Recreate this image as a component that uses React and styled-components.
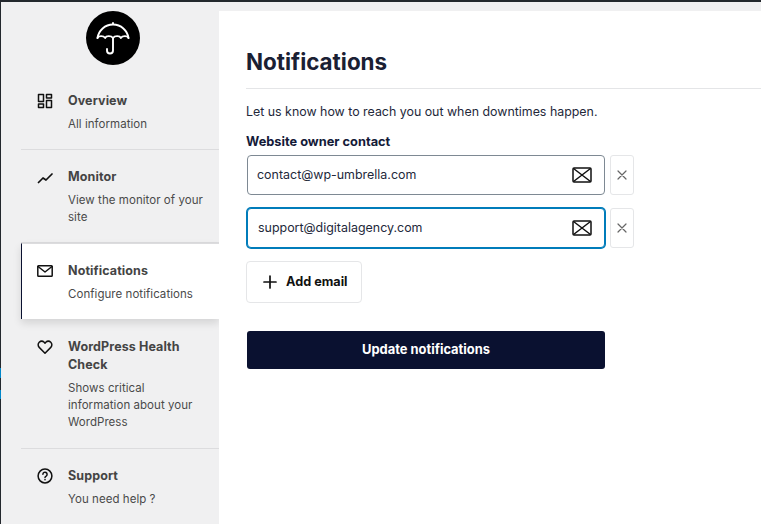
import React from "react";
import styled, { createGlobalStyle } from "styled-components";

const Global = createGlobalStyle`
  html, body { margin: 0; padding: 0; background: #f0f0f1; }
  * { box-sizing: border-box; }
  body { font-family: Inter, "Liberation Sans", sans-serif; -webkit-font-smoothing: antialiased; }
`;

const Page = styled.div`
  width: 761px;
  height: 524px;
  overflow: hidden;
  display: flex;
  flex-direction: column;
  background: #f0f0f1;
`;
const TopBar = styled.div`
  height: 2px;
  flex: none;
  background: #23282d;
`;
const Body = styled.div`
  flex: 1;
  display: flex;
  min-height: 0;
`;
const AdminEdge = styled.div`
  width: 1px;
  flex: none;
  background: linear-gradient(
    to bottom,
    #23282d 0 366px,
    #0086c9 366px 376px,
    #23282d 376px 388px,
    #0086c9 388px 397px,
    #23282d 397px
  );
`;
const Sidebar = styled.nav`
  width: 198px;
  margin-left: 20px;
  flex: none;
  display: flex;
  flex-direction: column;
`;
const LogoWrap = styled.div`
  display: flex;
  justify-content: center;
  padding: 9px 0 9px;
  margin-left: -14px;
`;
const Item = styled.div`
  display: grid;
  grid-template-columns: 31px 1fr;
  padding: 18px 10px ${(p) => (p.$tall ? "17px" : "16px")} ${(p) => (p.$active ? "15px" : "16px")};
  background: ${(p) => (p.$active ? "#fff" : "transparent")};
  border-top: ${(p) => (p.$active ? "1px solid #dcdcde" : "none")};
  border-bottom: ${(p) => (p.$active || p.$last ? "none" : "1px solid #dcdcde")};
  border-left: ${(p) => (p.$active ? "1px solid #0a1130" : "none")};
  margin-bottom: ${(p) => (p.$active ? "1px" : "0")};
  box-shadow: ${(p) => (p.$active ? "0 4px 8px rgba(0,0,0,0.12)" : "none")};
`;
const ItemIcon = styled.div`
  width: 16px;
  height: 18px;
  display: flex;
  align-items: center;
  color: #111;
`;
const ItemTitle = styled.div`
  font-size: 12.5px;
  line-height: 18px;
  font-weight: 700;
  color: #444;
  letter-spacing: 0.1px;
`;
const ItemDesc = styled.div`
  font-size: 11.5px;
  line-height: 17px;
  color: #4a4a4a;
  margin-top: 6px;
  letter-spacing: 0.05px;
`;
const Main = styled.main`
  flex: 1;
  margin-top: 9px;
  background: #fff;
  padding: 36px 0 0 27px;
`;
const Heading = styled.h1`
  margin: 0;
  font-size: 22.4px;
  line-height: 30px;
  font-weight: 700;
  color: #1a2033;
  padding-bottom: 11px;
  border-bottom: 1px solid #e4e5e7;
`;
const Intro = styled.p`
  margin: 14px 0 0;
  font-size: 12.4px;
  line-height: 18px;
  color: #23283a;
`;
const Label = styled.div`
  margin-top: 12px;
  padding-bottom: 1px;
  font-size: 12.8px;
  line-height: 18px;
  font-weight: 700;
  color: #141a38;
`;
const Rows = styled.div`
  margin-top: 3px;
  padding-left: 1px;
  display: flex;
  flex-direction: column;
  gap: 13px;
`;
const Row = styled.div`
  display: flex;
  gap: 5px;
`;
const Field = styled.div`
  width: 358px;
  height: 40px;
  display: flex;
  align-items: center;
  justify-content: space-between;
  padding: 0 12px 0 ${(p) => (p.$focus ? "10px" : "9px")};
  background: #fff;
  border: 1px solid ${(p) => (p.$focus ? "#007cba" : "#7e8993")};
  box-shadow: ${(p) => (p.$focus ? "0 0 0 1px #007cba" : "none")};
  border-radius: 4px;
  font-size: 12.45px;
  color: #23283a;
`;
const FieldText = styled.span`
  padding-bottom: 2px;
`;
const RemoveButton = styled.button`
  width: 24px;
  height: 40px;
  padding: 0;
  display: flex;
  align-items: center;
  justify-content: center;
  background: #fff;
  border: 1px solid #e5e6e8;
  border-radius: 3px;
  color: #666;
`;
const AddButton = styled.button`
  margin-top: 13px;
  width: 116px;
  height: 42px;
  display: flex;
  align-items: center;
  gap: 9px;
  padding: 0 0 0 16px;
  background: #fff;
  border: 1px solid #e5e6e8;
  border-radius: 4px;
  font: 700 12.7px Inter, "Liberation Sans", sans-serif;
  color: #111;
`;
const AddLabel = styled.span`
  padding-bottom: 2px;
`;
const SubmitButton = styled.button`
  display: block;
  margin: 28px 0 0 1px;
  width: 358px;
  height: 38px;
  padding: 0 0 2px;
  background: #0a1130;
  border: none;
  border-radius: 3px;
  font: 700 12.9px Inter, "Liberation Sans", sans-serif;
  color: #fff;
`;

const Svg = ({ size = 16, vb, sw = 1.5, children }) => (
  <svg width={size} height={size} viewBox={vb || "0 0 16 16"} fill="none" stroke="currentColor" strokeWidth={sw} strokeLinecap="round" strokeLinejoin="round">
    {children}
  </svg>
);

const Logo = () => (
  <svg width="54" height="54" viewBox="0 0 54 54">
    <circle cx="27" cy="27" r="27" fill="#000" />
    <g fill="none" stroke="#fff" strokeWidth="1.9" strokeLinecap="round" strokeLinejoin="round">
      <path d="M11.5 27C12.5 19.5 19 13.5 27 13.5S41.5 19.5 42.5 27" />
      <path d="M11.5 27c1-2.5 6-2.5 7.7 0c1-2.5 6-2.5 7.8 0c1.7-2.5 6.8-2.5 7.8 0c1.700-2.500 6.700-2.500 7.700 0" />
      <path d="M27 13v-1M27 27v12.500a3 3 0 0 1-6 0V38" />
    </g>
  </svg>
);
const OverviewIcon = () => (
  <Svg>
    <rect x="1.500" y="1.500" width="5" height="7" />
    <rect x="9.500" y="1.500" width="5" height="3.500" />
    <rect x="1.500" y="11" width="5" height="3.500" />
    <rect x="9.500" y="7.500" width="5" height="7" />
  </Svg>
);
const MonitorIcon = () => (
  <Svg sw={1.7}>
    <path d="M1.500 13.500L6 9l3 2L15 5" />
  </Svg>
);
const MailIcon = () => (
  <Svg>
    <rect x="0.800" y="2.800" width="14.400" height="10.400" rx="0.800" />
    <path d="M1 3.500l7 5.500l7-5.500" />
  </Svg>
);
const HeartIcon = () => (
  <Svg>
    <path d="M8 14.200L2.200 8.400a3.600 3.600 0 0 1 0-5.100a3.600 3.600 0 0 1 5 0L8 4.100l.8-.8a3.600 3.600 0 0 1 5 0a3.600 3.600 0 0 1 0 5.100z" />
  </Svg>
);
const HelpIcon = () => (
  <Svg>
    <circle cx="8" cy="8" r="6.900" />
    <path d="M5.900 6.200a2.100 2.100 0 1 1 3.200 1.900c-.7.4-1.100.8-1.100 1.500" />
    <path d="M8 11.600v.1" />
  </Svg>
);
const EnvelopeX = () => (
  <svg width="20" height="16" viewBox="0 0 20 16" fill="none" stroke="#111" strokeWidth="1.500" strokeLinejoin="round">
    <rect x="1" y="1" width="18" height="14" rx="1" />
    <path d="M1.500 1.500L18.500 14.500M18.500 1.500L1.500 14.500" />
  </svg>
);
const CloseIcon = () => (
  <Svg size={10} vb="0 0 10 10" sw={1.2}>
    <path d="M1 1l8 8M9 1l-8 8" />
  </Svg>
);
const PlusIcon = () => (
  <Svg size={14} vb="0 0 14 14" sw={1.7}>
    <path d="M7 1v12M1 7h12" />
  </Svg>
);

const nav = [
  { icon: <OverviewIcon />, title: "Overview", desc: "All information" },
  { icon: <MonitorIcon />, title: "Monitor", desc: "View the monitor of your site" },
  { icon: <MailIcon />, title: "Notifications", desc: "Configure notifications", active: true },
  { icon: <HeartIcon />, title: "WordPress Health Check", desc: "Shows critical information about your WordPress", tall: true },
  { icon: <HelpIcon />, title: "Support", desc: "You need help ?", last: true },
];

export default function App() {
  return (
    <Page>
      <Global />
      <TopBar />
      <Body>
        <AdminEdge />
        <Sidebar>
          <LogoWrap>
            <Logo />
          </LogoWrap>
          {nav.map((n) => (
            <Item key={n.title} $active={n.active} $last={n.last} $tall={n.tall}>
              <ItemIcon>{n.icon}</ItemIcon>
              <div>
                <ItemTitle>{n.title}</ItemTitle>
                <ItemDesc>{n.desc}</ItemDesc>
              </div>
            </Item>
          ))}
        </Sidebar>
        <Main>
          <Heading>Notifications</Heading>
          <Intro>Let us know how to reach you out when downtimes happen.</Intro>
          <Label>Website owner contact</Label>
          <Rows>
            <Row>
              <Field>
                <FieldText>contact@wp-umbrella.com</FieldText>
                <EnvelopeX />
              </Field>
              <RemoveButton aria-label="Remove">
                <CloseIcon />
              </RemoveButton>
            </Row>
            <Row>
              <Field $focus>
                <FieldText>support@digitalagency.com</FieldText>
                <EnvelopeX />
              </Field>
              <RemoveButton aria-label="Remove">
                <CloseIcon />
              </RemoveButton>
            </Row>
          </Rows>
          <AddButton>
            <PlusIcon />
            <AddLabel>Add email</AddLabel>
          </AddButton>
          <SubmitButton>Update notifications</SubmitButton>
        </Main>
      </Body>
    </Page>
  );
}
